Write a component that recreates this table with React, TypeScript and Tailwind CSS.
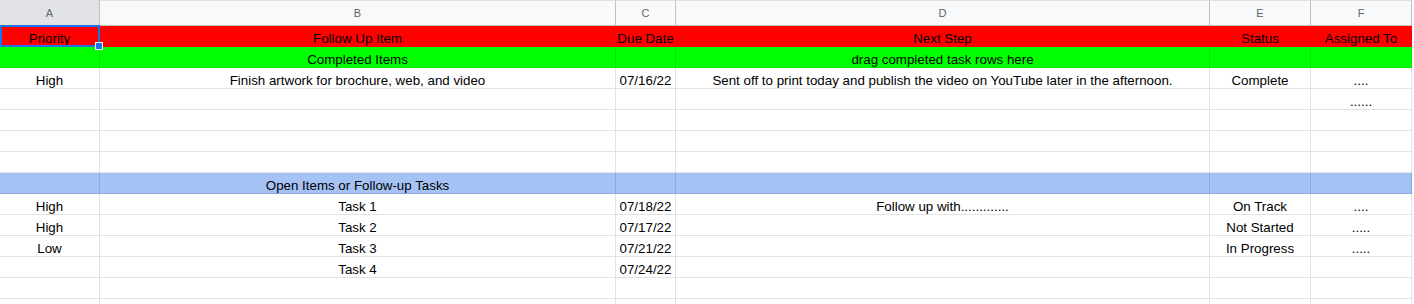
import React from "react";

type Row = { cells: string[]; bg?: "red" | "green" | "blue" };

const rows: Row[] = [
  { cells: ["Priority", "Follow Up Item", "Due Date", "Next Step", "Status", "Assigned To"], bg: "red" },
  { cells: ["", "Completed Items", "", "drag completed task rows here", "", ""], bg: "green" },
  { cells: ["High", "Finish artwork for brochure, web, and video", "07/16/22", "Sent off to print today and publish the video on YouTube later in the afternoon.", "Complete", "...."] },
  { cells: ["", "", "", "", "", "......"] },
  { cells: ["", "", "", "", "", ""] },
  { cells: ["", "", "", "", "", ""] },
  { cells: ["", "", "", "", "", ""] },
  { cells: ["", "Open Items or Follow-up Tasks", "", "", "", ""], bg: "blue" },
  { cells: ["High", "Task 1", "07/18/22", "Follow up with.............", "On Track", "...."] },
  { cells: ["High", "Task 2", "07/17/22", "", "Not Started", "....."] },
  { cells: ["Low", "Task 3", "07/21/22", "", "In Progress", "....."] },
  { cells: ["", "Task 4", "07/24/22", "", "", ""] },
  { cells: ["", "", "", "", "", ""] },
  { cells: ["", "", "", "", "", ""] },
];

const letters = ["A", "B", "C", "D", "E", "F"];

function cellClass(bg?: Row["bg"]) {
  if (bg === "red") return "bg-[#ff0000] border-r border-b border-[#ff0000]";
  if (bg === "green") return "bg-[#00ff00] border-r border-b border-[#00e800]";
  if (bg === "blue") return "bg-[#a4c2f4] border-r border-b border-[#8eaadb]";
  return "bg-white border-r border-b border-[#e2e2e2]";
}

export default function App() {
  return (
    <div
      className="relative w-[1414px] h-[304px] overflow-hidden bg-white"
      style={{ fontFamily: '"Liberation Sans", Arial, sans-serif' }}
    >
      <div className="grid grid-cols-[100px_516px_60px_534px_101px_101px]">
        {letters.map((l, i) => (
          <div
            key={l}
            className={
              "h-[26px] flex items-center justify-center text-[11px] text-[#5f6368] border-r border-b border-t border-t-[#e0e0e0] " +
              (i === 0
                ? "bg-[#e1e3e6] border-r-[#c0c0c0] border-b-[#1a73e8]"
                : "bg-[#f8f9fa] border-r-[#c0c0c0] border-b-[#c0c0c0]")
            }
          >
            {l}
          </div>
        ))}
        {rows.map((r, ri) =>
          r.cells.map((c, ci) => (
            <div
              key={ri + "-" + ci}
              className={
                "h-[21px] flex items-end justify-center whitespace-nowrap text-[13.33px] leading-[14px] text-black " +
                cellClass(r.bg)
              }
            >
              {c}
            </div>
          ))
        )}
      </div>
      <div className="absolute left-0 top-[25px] w-[100px] h-[22px] border-2 border-[#1a73e8] pointer-events-none" />
      <div className="absolute left-[95px] top-[42px] w-[8px] h-[8px] bg-[#1a73e8] border border-white" />
    </div>
  );
}
